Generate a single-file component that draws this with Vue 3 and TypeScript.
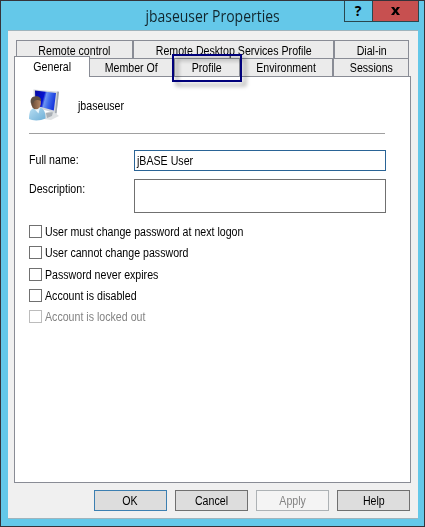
<script setup lang="ts">
import { ref } from 'vue'

interface Tab { label: string; width: number }
interface Option { label: string; disabled: boolean; height: number }

const backTabs: Tab[] = [
  { label: 'Remote control', width: 117 },
  { label: 'Remote Desktop Services Profile', width: 201 },
  { label: 'Dial-in', width: 75 },
]
const frontTabs: Tab[] = [
  { label: 'General', width: 76 },
  { label: 'Member Of', width: 84 },
  { label: 'Profile', width: 66 },
  { label: 'Environment', width: 93 },
  { label: 'Sessions', width: 76 },
]
const options: Option[] = [
  { label: 'User must change password at next logon', disabled: false, height: 21 },
  { label: 'User cannot change password', disabled: false, height: 22 },
  { label: 'Password never expires', disabled: false, height: 21 },
  { label: 'Account is disabled', disabled: false, height: 21 },
  { label: 'Account is locked out', disabled: true, height: 21 },
]
const buttons = ['OK', 'Cancel', 'Apply', 'Help']
const fullName = ref('jBASE User')
</script>

<template>
  <div class="window">
    <header class="titlebar">
      <h1><span>jbaseuser Properties</span></h1>
      <div class="controls">
        <div class="help">?</div>
        <div class="close">
          <svg width="9" height="8" viewBox="0 0 9 8"><path d="M0 0h3l1.500 2.400L6 0h3L6 4l3 4H6L4.500 5.600 3 8H0l3-4z" fill="#000" /></svg>
        </div>
      </div>
    </header>

    <main class="client">
      <div class="back-tabs">
        <div v-for="t in backTabs" :key="t.label" class="tab" :style="{ width: t.width + 'px' }">
          <span class="t mid">{{ t.label }}</span>
        </div>
      </div>
      <div class="front-tabs">
        <div
          v-for="(t, i) in frontTabs"
          :key="t.label"
          class="tab"
          :class="{ active: i === 0 }"
          :style="{ width: t.width + 'px' }"
        >
          <span class="t mid">{{ t.label }}</span>
          <div v-if="t.label === 'Profile'" class="highlight"></div>
        </div>
      </div>

      <section class="panel">
        <div class="identity">
          <svg class="avatar" width="32" height="34" viewBox="0 0 32 34">
            <defs>
              <linearGradient id="screen" x1="0" y1="0" x2="1" y2="0.250">
                <stop offset="0" stop-color="#0408a0" />
                <stop offset="0.450" stop-color="#0512d0" />
                <stop offset="0.560" stop-color="#6d95f2" />
                <stop offset="0.750" stop-color="#3c68ea" />
                <stop offset="1" stop-color="#1a3ade" />
              </linearGradient>
              <linearGradient id="shirt" x1="0" y1="0" x2="1" y2="1">
                <stop offset="0" stop-color="#b9dff3" />
                <stop offset="1" stop-color="#6daed6" />
              </linearGradient>
              <linearGradient id="skin" x1="0" y1="0" x2="1" y2="0">
                <stop offset="0" stop-color="#5e4432" />
                <stop offset="1" stop-color="#b98a66" />
              </linearGradient>
            </defs>
            <path d="M15 25l9-2 6 5-8 4-7-1z" fill="#dfe2e4" />
            <path d="M17 25l7-1-1 4-5 2z" fill="#a9afb5" />
            <path d="M4.500 1.500L30 3.800 27.500 25.500 5 19z" fill="#d3d7dc" />
            <path d="M28.300 3.600l1.700.2-2.500 21.700-1.500-.4z" fill="#a2a8af" />
            <path d="M6 2.600L27 5 24.800 22.600 6.500 17.500z" fill="url(#screen)" />
            <path d="M0 31c0-7 1.500-10 5-11l6-.5c4 1 5.500 4.500 5.500 11-5 2.500-13 2.500-16.500.5z" fill="url(#shirt)" />
            <path d="M4.500 20l6.500-.5-1.500 6z" fill="#eaf6fc" />
            <ellipse cx="7" cy="15" rx="4.900" ry="6.300" fill="url(#skin)" />
            <path d="M2 15.500c-1.300-4.500 1-7.300 5-7.300 3.400 0 5.500 2 5 5-3-1.500-5-1.300-6.500-.5-.8 1.500-1 3-3.500 2.800z" fill="#5f5042" />
          </svg>
          <span class="t">jbaseuser</span>
        </div>

        <div class="row">
          <label class="t">Full name:</label>
          <div class="field focused"><span class="t">{{ fullName }}</span></div>
        </div>
        <div class="row tall">
          <label class="t">Description:</label>
          <div class="field"></div>
        </div>

        <div class="options">
          <div
            v-for="o in options"
            :key="o.label"
            class="option"
            :class="{ disabled: o.disabled }"
            :style="{ height: o.height + 'px' }"
          >
            <i class="box"></i><span class="t">{{ o.label }}</span>
          </div>
        </div>
      </section>

      <footer class="buttons">
        <button
          v-for="b in buttons"
          :key="b"
          :class="{ primary: b === 'OK' }"
          :disabled="b === 'Apply'"
        ><span class="t mid">{{ b }}</span></button>
      </footer>
    </main>
  </div>
</template>

<style scoped>
* { box-sizing: border-box; }
.window {
  width: 425px;
  height: 527px;
  background: #64c8e9;
  border: 1px solid #35333a;
  font: 12.500px/14px "Liberation Sans", Arial, sans-serif;
  color: #000;
}
.titlebar {
  position: relative;
  height: 29px;
}
h1 {
  margin: 0;
  font: 400 15.500px/30px "Open Sans", "Noto Sans", sans-serif;
  text-align: center;
  color: #12262d;
}
h1 span { display: inline-block; transform: scaleX(.9); }
.controls {
  position: absolute;
  top: 0;
  right: 5px;
  display: flex;
  height: 21px;
  border: 1px solid #29474f;
  border-top: 0;
}
.help {
  width: 28px;
  border-right: 1px solid #29474f;
  font: 700 14px/20px "Open Sans", sans-serif;
  text-align: center;
  padding-right: 1px;
}
.close {
  display: flex;
  width: 45px;
  align-items: center;
  justify-content: center;
  background: #c75050;
}
.client {
  width: 410px;
  height: 489px;
  margin-left: 7px;
  padding: 9px 6px 0;
  background: #f0f0f0;
  border-top: 1px solid #9fb4bd;
  border-bottom: 1px solid #9fb4bd;
}
.t {
  display: inline-block;
  white-space: nowrap;
  transform: scaleX(.85);
  transform-origin: left center;
}
.t.mid { transform-origin: center; }
.back-tabs, .front-tabs { display: flex; }
.back-tabs { padding-left: 2px; height: 18px; }
.front-tabs { height: 18px; }
.tab {
  position: relative;
  display: flex;
  flex: none;
  height: 18px;
  align-items: center;
  justify-content: center;
  padding-top: 1px;
  background: #ebebeb;
  border: solid #898c95;
  border-width: 1px 1px 0;
}
.back-tabs .tab { padding-top: 2px; }
.tab.active + .tab { border-left-width: 0; }
.tab.active {
  z-index: 1;
  height: 21px;
  margin-top: -2px;
  padding: 0 0 1px;
  background: #fff;
}
.highlight {
  position: absolute;
  z-index: 2;
  left: -3px;
  top: -5px;
  width: 70px;
  height: 28px;
  border: 2px solid #00007b;
  filter: drop-shadow(4px 4px 2px rgba(0, 0, 0, .4));
}
.panel {
  width: 397px;
  height: 407px;
  padding: 11px 14px 0;
  background: #fff;
  border: 1px solid #898c95;
}
.identity {
  display: flex;
  width: 356px;
  height: 46px;
  border-bottom: 1px solid #a0a0a0;
}
.identity .t { margin: 11px 0 0 17px; }
.row {
  display: flex;
  height: 21px;
  margin-top: 16px;
}
.row label { width: 105px; padding-top: 3px; }
.row.tall { height: 34px; margin-top: 8px; }
.field {
  width: 252px;
  padding: 3px 2px;
  border: 1px solid #707070;
}
.field.focused { border-color: #2a6496; }
.options { margin-top: 12px; }
.option { display: flex; align-items: flex-start; }
.box {
  width: 13px;
  height: 13px;
  margin-right: 3px;
  border: 1px solid #707070;
}
.disabled { color: #838383; }
.disabled .box { border-color: #bcbcbc; }
.buttons {
  display: flex;
  gap: 8px;
  padding: 7px 0 0 80px;
}
button {
  display: flex;
  width: 73px;
  height: 21px;
  padding: 0;
  align-items: center;
  justify-content: center;
  font: inherit;
  color: #000;
  background: #ddd;
  border: 1px solid #707070;
  border-radius: 0;
}
button.primary { border-color: #3c7fb1; }
button:disabled { color: #838383; background: #f4f4f4; border-color: #adb2b5; }
</style>
